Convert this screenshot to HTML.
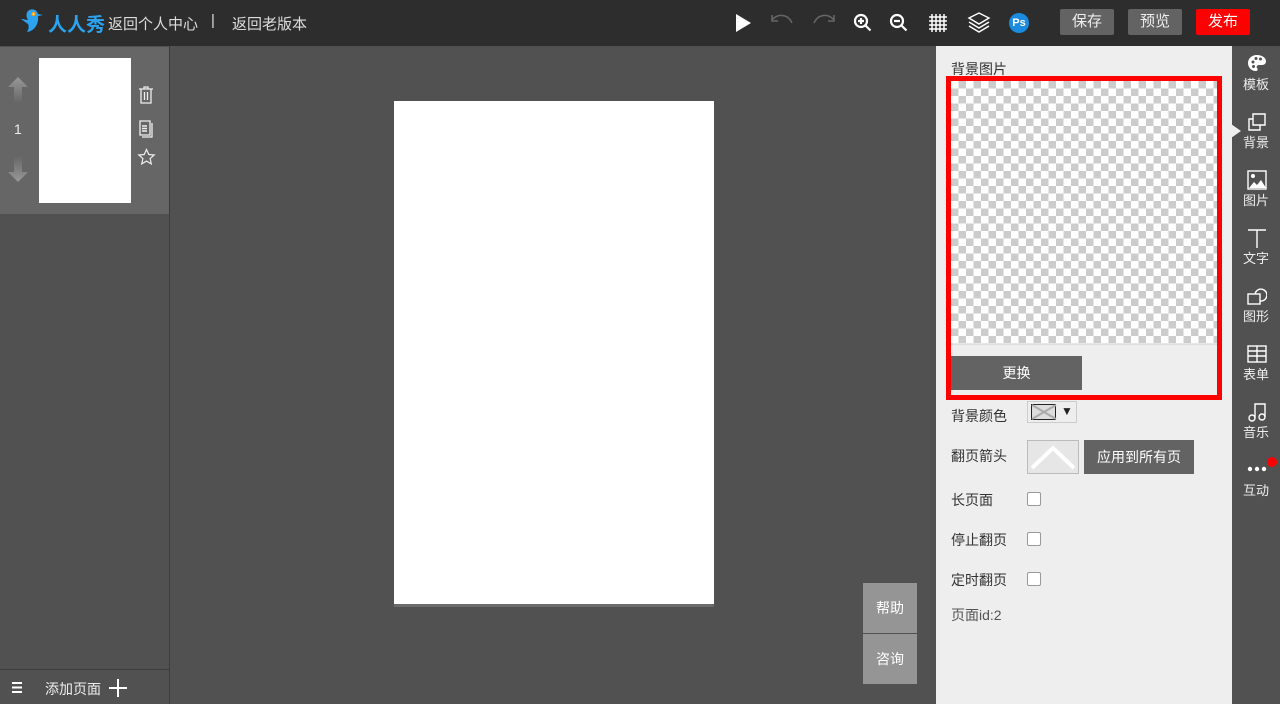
<!DOCTYPE html>
<html><head><meta charset="utf-8"><style>
*{margin:0;padding:0;box-sizing:border-box}
body{width:1280px;height:704px;overflow:hidden;background:#515151;font-family:"Liberation Sans","Noto Sans CJK SC",sans-serif;position:relative;font-size:14px}
.a{position:absolute}
.top{left:0;top:0;width:1280px;height:46px;background:#2d2d2d;color:#ddd}
.btn{top:9px;height:26px;line-height:26px;text-align:center;color:#eee;font-size:15px;border-radius:2px}
.side{right:0;top:46px;width:48px;height:658px;background:#515151;color:#eee;font-size:13px}
.side .it{position:absolute;left:0;width:48px;text-align:center}
.lbl{left:951px;color:#333;font-size:14px}
.cb{left:1027px;width:14px;height:14px;border:1px solid #999;border-radius:2px;background:#fff}
</style></head><body>
<div class="a top">
  <svg class="a" style="left:20px;top:7px" width="30" height="32" viewBox="0 0 30 30"><path d="M8 3c3-3 9-2 10 3l5 1-5 1c1 7-3 15-11 16 2-3 2-6 1-8L1 11c3 0 5 1 7 1C6 9 6 5 8 3z" fill="#2ba3f0"/><circle cx="13.5" cy="6" r="2.2" fill="#f90"/><circle cx="13.5" cy="6" r="0.9" fill="#fff"/></svg>
  <div class="a" style="left:48px;top:10px;color:#2ba3f0;font-size:19px;font-weight:bold">人人秀</div>
  <div class="a" style="left:108px;top:13px;font-size:15px">返回个人中心</div>
  <div class="a" style="left:211px;top:12px;font-size:15px">|</div>
  <div class="a" style="left:232px;top:13px;font-size:15px">返回老版本</div>
  <svg class="a" style="left:734px;top:13px" width="18" height="20"><path d="M2 1L17 10L2 19Z" fill="#fff"/></svg>
  <svg class="a" style="left:768px;top:13px" width="28" height="20" fill="none" stroke="#666" stroke-width="1.5"><path d="M4 7C10 0 20 1 24 10M4 2v6h6"/></svg>
  <svg class="a" style="left:810px;top:13px" width="28" height="20" fill="none" stroke="#666" stroke-width="1.5"><path d="M24 7C18 0 8 1 4 10M24 2v6h-6"/></svg>
  <svg class="a" style="left:853px;top:13px" width="20" height="20" fill="none" stroke="#fff" stroke-width="2.2"><circle cx="8" cy="8" r="6"/><path d="M12.5 12.5l5 5M5 8h6M8 5v6"/></svg>
  <svg class="a" style="left:889px;top:13px" width="20" height="20" fill="none" stroke="#fff" stroke-width="2.2"><circle cx="8" cy="8" r="6"/><path d="M12.5 12.5l5 5M5 8h6"/></svg>
  <svg class="a" style="left:928px;top:13px" width="20" height="20" stroke="#fff" stroke-width="1.5"><path d="M4 1v18M8 1v18M12 1v18M16 1v18M1 4h18M1 8h18M1 12h18M1 16h18"/></svg>
  <svg class="a" style="left:967px;top:11px" width="24" height="24" fill="#2d2d2d" stroke="#fff" stroke-width="1.4"><path d="M2 15l10 6 10-6M2 11l10 6 10-6"/><path d="M2 7l10-5 10 5-10 6z"/></svg>
  <div class="a" style="left:1009px;top:13px;width:20px;height:20px;border-radius:50%;background:#1a8be0;color:#fff;font-size:11px;font-weight:bold;text-align:center;line-height:20px">Ps</div>
  <div class="a btn" style="left:1060px;width:54px;background:#636363">保存</div>
  <div class="a btn" style="left:1128px;width:54px;background:#636363">预览</div>
  <div class="a btn" style="left:1196px;width:54px;background:#f00;color:#fff">发布</div>
</div>
<div class="a" style="left:0;top:46px;width:170px;height:658px;background:#515151;border-right:1px solid #3c3c3c"></div>
<div class="a" style="left:0;top:47px;width:169px;height:167px;background:#666"></div>
<svg class="a" style="left:7px;top:76px" width="22" height="28"><defs><linearGradient id="g1" x1="0" y1="0" x2="0" y2="1"><stop offset="0" stop-color="#999"/><stop offset="1" stop-color="#666"/></linearGradient><linearGradient id="g2" x1="0" y1="1" x2="0" y2="0"><stop offset="0" stop-color="#999"/><stop offset="1" stop-color="#666"/></linearGradient></defs><path d="M11 1L21 11H15V27H7V11H1Z" fill="url(#g1)"/></svg>
<div class="a" style="left:14px;top:121px;color:#eee;font-size:14px">1</div>
<svg class="a" style="left:7px;top:155px" width="22" height="28"><path d="M11 27L21 17H15V1H7V17H1Z" fill="url(#g2)"/></svg>
<div class="a" style="left:39px;top:58px;width:92px;height:145px;background:#fff"></div>
<svg class="a" style="left:137px;top:85px" width="18" height="20" fill="none" stroke="#eee" stroke-width="1.3"><path d="M2 4h14M7 4V2h4v2M4 4v14h10V4M7.5 7v8M10.5 7v8"/></svg>
<svg class="a" style="left:138px;top:119px" width="18" height="20" fill="none" stroke="#eee" stroke-width="1.3"><path d="M2 2h10v14H2zM14 4v14H4"/><path d="M4 7h5M4 9.5h5M4 12h5" stroke-width="1.6"/></svg>
<svg class="a" style="left:137px;top:148px" width="19" height="19" fill="none" stroke="#eee" stroke-width="1.2"><path d="M9.5 1.5l2.3 5 5.4.5-4.1 3.6 1.2 5.3-4.8-2.8-4.8 2.8 1.2-5.3L1.8 7l5.4-.5z"/></svg>
<div class="a" style="left:0;top:669px;width:169px;height:1px;background:#3c3c3c"></div>
<svg class="a" style="left:12px;top:682px" width="10" height="11" fill="#fff"><rect x="0" y="0" width="10" height="2"/><rect x="0" y="4.5" width="10" height="2"/><rect x="0" y="9" width="10" height="2"/></svg>
<div class="a" style="left:45px;top:679px;color:#eee;font-size:14px">添加页面</div>
<svg class="a" style="left:109px;top:679px" width="18" height="18" stroke="#fff" stroke-width="2"><path d="M9 0v18M0 9h18"/></svg>
<div class="a" style="left:394px;top:101px;width:320px;height:503px;background:#fff"></div>
<div class="a" style="left:394px;top:604px;width:320px;height:3px;background:#6a6a6a"></div>
<div class="a" style="left:863px;top:583px;width:54px;height:50px;background:#959595;color:#fff;text-align:center;line-height:50px">帮助</div>
<div class="a" style="left:863px;top:634px;width:54px;height:50px;background:#959595;color:#fff;text-align:center;line-height:50px">咨询</div>
<div class="a" style="left:936px;top:46px;width:296px;height:658px;background:#eee"></div>
<div class="a lbl" style="top:59px">背景图片</div>
<div class="a" style="left:946px;top:76px;width:276px;height:324px;border:5px solid #f00"></div>
<div class="a" style="left:951px;top:81px;width:266px;height:264px;background-color:#fff;background-image:linear-gradient(45deg,#ccc 25%,transparent 25%,transparent 75%,#ccc 75%),linear-gradient(45deg,#ccc 25%,transparent 25%,transparent 75%,#ccc 75%);background-size:15px 15px;background-position:0 0,7.5px 7.5px;border-bottom:1px solid #ddd"></div>
<div class="a" style="left:951px;top:356px;width:131px;height:34px;background:#636363;color:#fff;text-align:center;line-height:34px">更换</div>
<div class="a lbl" style="top:406px">背景颜色</div>
<div class="a" style="left:1027px;top:401px;width:50px;height:22px;border:1px solid #ccc;background:#eee"></div>
<svg class="a" style="left:1031px;top:404px" width="26" height="16"><rect x="0.5" y="0.5" width="24" height="15" fill="#ddd" stroke="#222"/><path d="M1 1l24 14M25 1L1 15" stroke="#aaa" stroke-width="2"/></svg>
<div class="a" style="left:1061px;top:404px;font-size:12px;color:#222">▼</div>
<div class="a lbl" style="top:446px">翻页箭头</div>
<div class="a" style="left:1027px;top:440px;width:52px;height:34px;border:1px solid #bbb;background:#e6e6e6"></div>
<svg class="a" style="left:1030px;top:443px" width="46" height="28"><path d="M2 25L23 5 44 25" fill="none" stroke="#fff" stroke-width="4"/></svg>
<div class="a" style="left:1084px;top:440px;width:110px;height:34px;background:#636363;color:#fff;text-align:center;line-height:34px">应用到所有页</div>
<div class="a lbl" style="top:490px">长页面</div><div class="a cb" style="top:492px"></div>
<div class="a lbl" style="top:530px">停止翻页</div><div class="a cb" style="top:532px"></div>
<div class="a lbl" style="top:570px">定时翻页</div><div class="a cb" style="top:572px"></div>
<div class="a lbl" style="top:605px;color:#555">页面id:2</div>
<div class="a side">
 <svg class="a" style="left:15px;top:8px" width="20" height="18"><path d="M10 1C4 1 1 5 1 9s3 8 8 8c2 0 2-2 1-3s0-3 2-3h3c3 0 4-2 4-4C19 4 15 1 10 1z" fill="#fff"/><circle cx="6" cy="8" r="1.5" fill="#515151"/><circle cx="9" cy="4.5" r="1.5" fill="#515151"/><circle cx="13.5" cy="5" r="1.5" fill="#515151"/><circle cx="6.5" cy="12.5" r="1.5" fill="#515151"/></svg>
 <div class="it" style="top:28px">模板</div>
 <svg class="a" style="left:-1px;top:78px" width="10" height="14"><path d="M0 0L10 7L0 14Z" fill="#eee"/></svg>
 <svg class="a" style="left:15px;top:66px" width="20" height="20" fill="none" stroke="#fff" stroke-width="1.4"><path d="M6 2h12v11H6z"/><path d="M6 7H2v11h11v-5"/></svg>
 <div class="it" style="top:86px">背景</div>
 <svg class="a" style="left:15px;top:124px" width="20" height="20"><rect x="1" y="1" width="18" height="18" fill="none" stroke="#fff" stroke-width="1.4"/><circle cx="6" cy="6" r="2" fill="#fff"/><path d="M2 18l5-6 3 3 4-5 5 8z" fill="#fff"/></svg>
 <div class="it" style="top:144px">图片</div>
 <svg class="a" style="left:15px;top:182px" width="20" height="20" stroke="#fff" stroke-width="1.4"><path d="M1 2h18M10 2v18"/></svg>
 <div class="it" style="top:202px">文字</div>
 <svg class="a" style="left:15px;top:240px" width="20" height="20" fill="none" stroke="#fff" stroke-width="1.4"><rect x="1" y="8" width="12" height="10"/><path d="M8 8a6 6 0 1 1 5 7"/></svg>
 <div class="it" style="top:260px">图形</div>
 <svg class="a" style="left:15px;top:298px" width="20" height="20" fill="none" stroke="#fff" stroke-width="1.4"><rect x="1" y="2" width="18" height="16"/><path d="M1 7h18M1 12h18M10 2v16"/></svg>
 <div class="it" style="top:318px">表单</div>
 <svg class="a" style="left:15px;top:356px" width="20" height="20" fill="none" stroke="#fff" stroke-width="1.4"><circle cx="5" cy="16" r="3"/><circle cx="15" cy="15" r="3"/><path d="M8 16V2h10v13"/></svg>
 <div class="it" style="top:376px">音乐</div>
 <svg class="a" style="left:15px;top:420px" width="20" height="6" fill="#fff"><circle cx="3" cy="3" r="2.2"/><circle cx="10" cy="3" r="2.2"/><circle cx="17" cy="3" r="2.2"/></svg>
 <div class="a" style="left:35px;top:411px;width:10px;height:10px;border-radius:50%;background:#f00"></div>
 <div class="it" style="top:434px">互动</div>
</div>
</body></html>
